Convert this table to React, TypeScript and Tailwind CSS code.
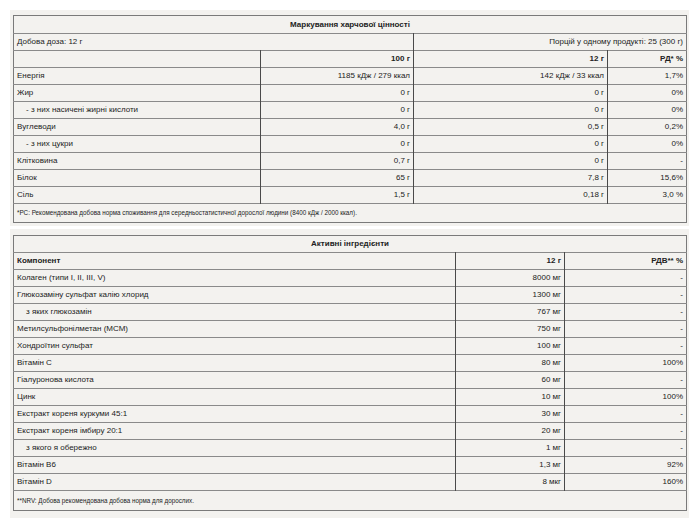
const nutrition = [
  { name: 'Енергія', per100: '1185 кДж / 279 ккал', perDose: '142 кДж / 33 ккал', rd: '1,7%' },
  { name: 'Жир', per100: '0 г', perDose: '0 г', rd: '0%' },
  { name: '- з них насичені жирні кислоти', per100: '0 г', perDose: '0 г', rd: '0%', sub: true },
  { name: 'Вуглеводи', per100: '4,0 г', perDose: '0,5 г', rd: '0,2%' },
  { name: '- з них цукри', per100: '0 г', perDose: '0 г', rd: '0%', sub: true },
  { name: 'Клітковина', per100: '0,7 г', perDose: '0 г', rd: '-' },
  { name: 'Білок', per100: '65 г', perDose: '7,8 г', rd: '15,6%' },
  { name: 'Сіль', per100: '1,5 г', perDose: '0,18 г', rd: '3,0 %' },
];

const actives = [
  { name: 'Колаген (типи I, II, III, V)', dose: '8000 мг', rdv: '-' },
  { name: 'Глюкозаміну сульфат калію хлорид', dose: '1300 мг', rdv: '-' },
  { name: 'з яких глюкозамін', dose: '767 мг', rdv: '-', sub: true },
  { name: 'Метилсульфонілметан (МСМ)', dose: '750 мг', rdv: '-' },
  { name: 'Хондроїтин сульфат', dose: '100 мг', rdv: '-' },
  { name: 'Вітамін C', dose: '80 мг', rdv: '100%' },
  { name: 'Гіалуронова кислота', dose: '60 мг', rdv: '-' },
  { name: 'Цинк', dose: '10 мг', rdv: '100%' },
  { name: 'Екстракт кореня куркуми 45:1', dose: '30 мг', rdv: '-' },
  { name: 'Екстракт кореня імбиру 20:1', dose: '20 мг', rdv: '-' },
  { name: 'з якого я обережно', dose: '1 мг', rdv: '-', sub: true },
  { name: 'Вітамін B6', dose: '1,3 мг', rdv: '92%' },
  { name: 'Вітамін D', dose: '8 мкг', rdv: '160%' },
];

const row = 'h-[17px] border-b border-[#8a8a8a]';
const cell = 'px-[3px] py-0 align-middle';
const vline = 'border-r border-[#4a4a4a]';

export default function App() {
  return (
    <div
      className="w-[700px] h-[527px] bg-white pt-[10px] px-[10px] text-[8px] leading-[10px] text-[#222]"
      style={{ fontFamily: '"Liberation Sans", Arial, sans-serif' }}
    >
      <div className="w-[679px] bg-[#f3f2ef] pt-[5px] pb-[3px] px-[3px]">
        <table className="w-[673px] border-collapse border border-[#7a7a7a] table-fixed">
          <colgroup>
            <col className="w-[247px]" />
            <col className="w-[153px]" />
            <col className="w-[194px]" />
            <col className="w-[79px]" />
          </colgroup>
          <tbody>
            <tr className="h-[18px] border-b border-[#8a8a8a]">
              <td colSpan={4} className={`${cell} text-center font-bold`}>
                Маркування харчової цінності
              </td>
            </tr>
            <tr className={row}>
              <td colSpan={2} className={`${cell} ${vline}`}>Добова доза: 12 г</td>
              <td colSpan={2} className={`${cell} text-right`}>Порцій у одному продукті: 25 (300 г)</td>
            </tr>
            <tr className={row}>
              <td className={`${cell} ${vline}`}></td>
              <td className={`${cell} ${vline} text-right font-bold`}>100 г</td>
              <td className={`${cell} ${vline} text-right font-bold`}>12 г</td>
              <td className={`${cell} text-right font-bold`}>РД* %</td>
            </tr>
            {nutrition.map((n) => (
              <tr key={n.name} className={row}>
                <td className={`${cell} ${vline} ${n.sub ? 'pl-[12px]' : ''}`}>{n.name}</td>
                <td className={`${cell} ${vline} text-right`}>{n.per100}</td>
                <td className={`${cell} ${vline} text-right`}>{n.perDose}</td>
                <td className={`${cell} text-right`}>{n.rd}</td>
              </tr>
            ))}
            <tr className="h-[19px]">
              <td colSpan={4} className={`${cell} text-[6.3px]`}>
                *РС: Рекомендована добова норма споживання для середньостатистичної дорослої людини (8400 кДж / 2000 ккал).
              </td>
            </tr>
          </tbody>
        </table>
      </div>

      <div className="h-[3px]" />

      <div className="w-[679px] bg-[#f3f2ef] pt-[6px] pb-[7px] px-[3px]">
        <table className="w-[673px] border-collapse border border-[#7a7a7a] table-fixed">
          <colgroup>
            <col className="w-[442px]" />
            <col className="w-[109px]" />
            <col className="w-[122px]" />
          </colgroup>
          <tbody>
            <tr className={row}>
              <td colSpan={3} className={`${cell} text-center font-bold`}>Активні інгредієнти</td>
            </tr>
            <tr className={row}>
              <td className={`${cell} ${vline} font-bold`}>Компонент</td>
              <td className={`${cell} ${vline} text-right font-bold`}>12 г</td>
              <td className={`${cell} text-right font-bold`}>РДВ** %</td>
            </tr>
            {actives.map((a) => (
              <tr key={a.name} className={row}>
                <td className={`${cell} ${vline} ${a.sub ? 'pl-[12px]' : ''}`}>{a.name}</td>
                <td className={`${cell} ${vline} text-right`}>{a.dose}</td>
                <td className={`${cell} text-right`}>{a.rdv}</td>
              </tr>
            ))}
            <tr className="h-[20px]">
              <td colSpan={3} className={`${cell} text-[6.3px]`}>
                **NRV: Добова рекомендована добова норма для дорослих.
              </td>
            </tr>
          </tbody>
        </table>
      </div>
    </div>
  );
}
